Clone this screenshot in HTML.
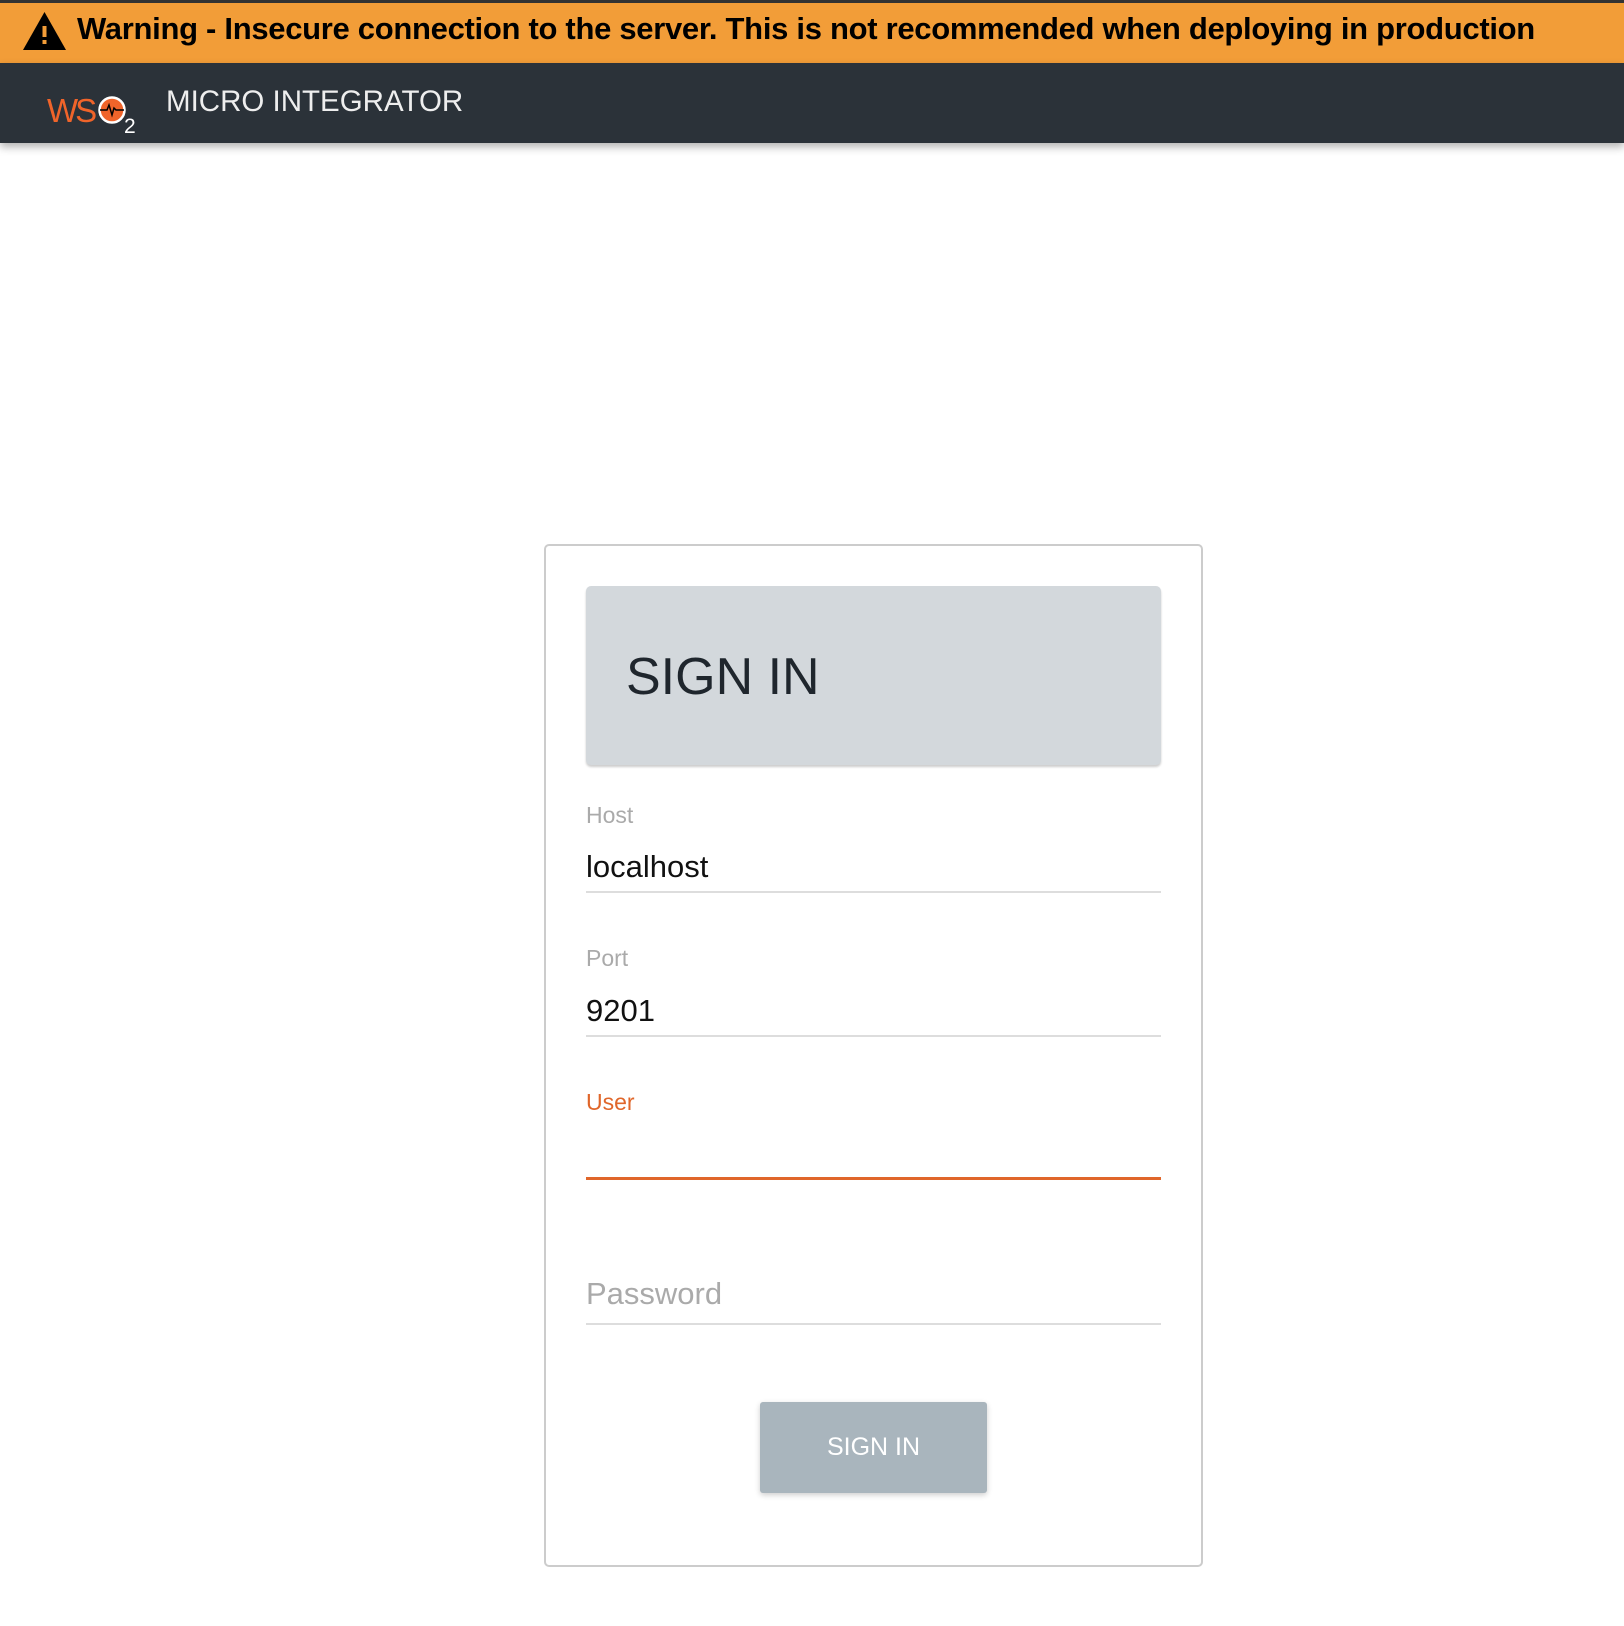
<!DOCTYPE html>
<html><head><meta charset="utf-8"><style>
*{box-sizing:border-box;margin:0;padding:0}
body{width:1624px;height:1626px;background:#fff;font-family:"Liberation Sans",Arial,sans-serif;position:relative;overflow:hidden}
.abs{position:absolute}
.top{left:0;top:0;width:1624px;height:3px;background:#333}
.warn{left:0;top:3px;width:1624px;height:60px;background:#f29d38}
.warn span{position:absolute;left:77px;top:8px;font-size:31px;font-weight:bold;color:#000;white-space:nowrap;letter-spacing:-0.3px}
.nav{left:0;top:63px;width:1624px;height:80px;background:#2b3239;box-shadow:0 4px 8px rgba(0,0,0,.3)}
.title{left:166px;top:85px;font-size:29.5px;color:#eee;white-space:nowrap}
.card{left:544px;top:544px;width:659px;height:1023px;border:2px solid #ccc;border-radius:5px}
.hdr{left:586px;top:586px;width:575px;height:179px;background:#d3d8dc;border-radius:5px;box-shadow:0 2px 2px rgba(0,0,0,.2)}
.hdr span{position:absolute;left:40px;top:61px;font-size:52px;color:#1f262d}
.lbl{left:586px;font-size:23px;color:#aaa}
.val{left:586px;font-size:31px;color:#111}
.line{left:586px;width:575px;height:2px;background:#ddd}
.btn{left:760px;top:1402px;width:227px;height:91px;background:#a9b5bd;border-radius:3px;box-shadow:0 2px 6px rgba(0,0,0,.2);color:#fff;font-size:25px;text-align:center;line-height:91px}
</style></head><body>
<div class="abs top"></div>
<div class="abs warn">
<svg style="position:absolute;left:22px;top:8px" width="45" height="40" viewBox="0 0 45 40"><path d="M22.5 1 L44 39 L1 39 Z" fill="#000"/><rect x="20.5" y="15" width="4" height="11" fill="#f29d38"/><rect x="20.5" y="29" width="4" height="4" fill="#f29d38"/></svg>
<span>Warning - Insecure connection to the server. This is not recommended when deploying in production</span></div>
<div class="abs nav"></div>
<svg class="abs" style="left:46px;top:92px" width="95" height="42" viewBox="0 0 95 42">
<text x="1" y="30" font-family="Liberation Sans,sans-serif" font-size="33" fill="#f0642a" letter-spacing="-3" font-weight="normal" transform="scale(1,1)">WS</text>
<circle cx="66" cy="18" r="12.5" fill="#f0642a" stroke="#fff" stroke-width="2.5"/>
<path d="M54 18 L61 18 L63 13 L66 23 L68 16 L70 18 L78 18" stroke="#000" stroke-width="1.5" fill="none"/>
<text x="78" y="41" font-family="Liberation Sans,sans-serif" font-size="21" fill="#fff">2</text></svg>
<div class="abs title">MICRO INTEGRATOR</div>
<div class="abs card"></div>
<div class="abs hdr"><span>SIGN IN</span></div>
<div class="abs lbl" style="top:802px">Host</div>
<div class="abs val" style="top:849px">localhost</div>
<div class="abs line" style="top:891px"></div>
<div class="abs lbl" style="top:945px">Port</div>
<div class="abs val" style="top:993px">9201</div>
<div class="abs line" style="top:1035px"></div>
<div class="abs lbl" style="top:1089px;color:#e0662a">User</div>
<div class="abs line" style="top:1177px;height:3px;background:#e0662a"></div>
<div class="abs val" style="top:1276px;color:#aaa">Password</div>
<div class="abs line" style="top:1323px"></div>
<div class="abs btn">SIGN IN</div>
</body></html>
